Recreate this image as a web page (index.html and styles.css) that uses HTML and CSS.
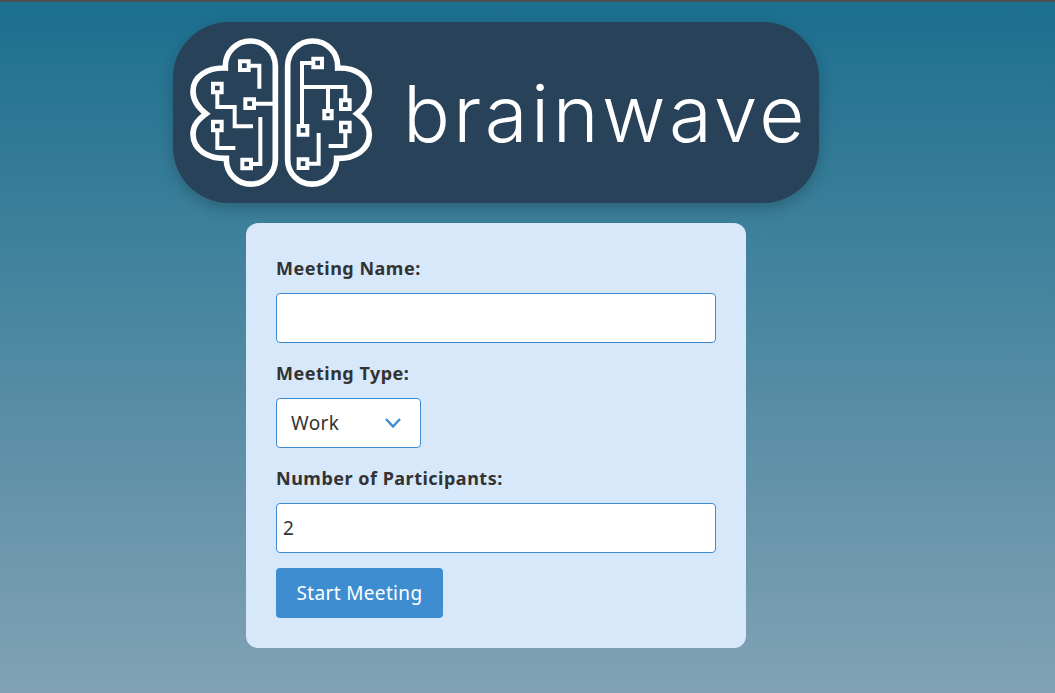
FILE: index.html
```html
<!DOCTYPE html>
<html lang="en">
<head>
<meta charset="utf-8">
<title>Brainwave</title>
<link rel="stylesheet" href="styles.css">
</head>
<body>
<main class="page">
  <header class="logo">
    <svg class="brain" viewBox="50 110 565 455" aria-hidden="true">
      <g class="lines">
        <path class="outline" d="M315 197A75 75 0 0 0 165 197V203C112 201 68 228 68 273C68 304 87 325 107 340C87 355 68 372 68 402C68 447 112 476 168 474V478A73.500 73.500 0 0 0 315 478Z"/>
        <path class="outline" d="M352 197A75 75 0 0 1 502 197V203C555 201 597 228 597 273C597 304 580 325 560 340C580 355 597 372 597 402C597 447 555 476 499 474V478A73.500 73.500 0 0 1 352 478Z"/>
        <path d="M236 196H267V265M141 276V320H193V378H248M250 310H310M141 390V443H195M241 491H270V350"/>
        <path d="M430 188H395V375M395 260H525V300M473 260V330M525 392V437H475M410 490H445V398"/>
        <path d="M209 183h26v26h-26zM128 250h26v26h-26zM225 297h26v26h-26zM128 364h26v26h-26zM216 478h26v26h-26z"/>
        <path d="M429 175h26v26h-26zM385 377h26v26h-26zM512 300h26v26h-26zM462 332h22v22h-22zM512 367h26v26h-26zM385 477h26v26h-26z"/>
      </g>
    </svg>
    <span class="wordmark">brainwave</span>
  </header>
  <form class="card">
    <label class="label" for="name">Meeting Name:</label>
    <input class="field" id="name" type="text">
    <label class="label" for="type">Meeting Type:</label>
    <div class="select-wrap">
      <select class="select" id="type">
        <option>Work</option>
        <option>Personal</option>
      </select>
      <svg class="chevron" viewBox="0 0 18 12" aria-hidden="true"><path d="M2 2L9 9.500L16 2"/></svg>
    </div>
    <label class="label" for="count">Number of Participants:</label>
    <input class="field" id="count" type="number" value="2">
    <button class="submit" type="button">Start Meeting</button>
  </form>
</main>
</body>
</html>
```

FILE: styles.css
```css
* {
  box-sizing: border-box;
}

html,
body {
  height: 100%;
}

body {
  margin: 0;
  overflow: hidden;
  border-top: 2px solid #4a4f52;
  background: linear-gradient(180deg, #1b6f8f 0%, #82a2b4 100%);
  font-family: "Noto Sans", "Open Sans", sans-serif;
  color: #333;
}

.page {
  width: 646px;
  margin-left: 173px;
  padding-top: 20px;
  display: flex;
  flex-direction: column;
  align-items: center;
  gap: 20px;
}

.logo {
  width: 646px;
  height: 181px;
  border-radius: 56px;
  background: #284259;
  box-shadow: 0 5px 15px rgba(0, 0, 0, 0.22);
  display: flex;
  align-items: flex-start;
}

.brain {
  flex: none;
  width: 188.33px;
  height: 151.67px;
  margin: 14.67px 0 0 13.67px;
}

.lines path {
  fill: none;
  stroke: #fff;
  stroke-width: 12;
}

.lines .outline {
  stroke-width: 17;
}

.wordmark {
  margin: 42px 0 0 28px;
  font-family: Inter, sans-serif;
  font-weight: 300;
  font-size: 78px;
  line-height: 100px;
  letter-spacing: 3.4px;
  color: #fff;
}

.card {
  width: 500px;
  height: 425px;
  padding: 30px;
  border-radius: 12px;
  background: #d6e8fa;
  display: flex;
  flex-direction: column;
  align-items: flex-start;
}

.label {
  height: 40px;
  padding-top: 2px;
  font-size: 18px;
  line-height: 26px;
  letter-spacing: 0.5px;
  font-weight: 700;
}

.field {
  width: 100%;
  height: 50px;
  margin-bottom: 15px;
  padding: 0 6px;
  border: 1px solid #3d8cd3;
  border-radius: 4px;
  background: #fff;
  font: 19px "Noto Sans", sans-serif;
  letter-spacing: 0.35px;
  color: #333;
  appearance: textfield;
}

.select-wrap {
  position: relative;
  width: 145px;
  height: 50px;
  margin-bottom: 15px;
}

.select {
  width: 100%;
  height: 100%;
  padding: 0 14px;
  border: 1px solid #3d8cd3;
  border-radius: 4px;
  background: #fff;
  font: 19px "Noto Sans", sans-serif;
  letter-spacing: 0.35px;
  color: #333;
  appearance: none;
}

.chevron {
  position: absolute;
  top: 19px;
  right: 19px;
  width: 18px;
  height: 12px;
  pointer-events: none;
}

.chevron path {
  fill: none;
  stroke: #3d8cd3;
  stroke-width: 2.5;
}

.submit {
  width: 167px;
  height: 50px;
  padding: 0;
  border: 0;
  border-radius: 4px;
  background: #3f8dd1;
  font: 19px "Noto Sans", sans-serif;
  letter-spacing: 0.35px;
  color: #fff;
}
```
